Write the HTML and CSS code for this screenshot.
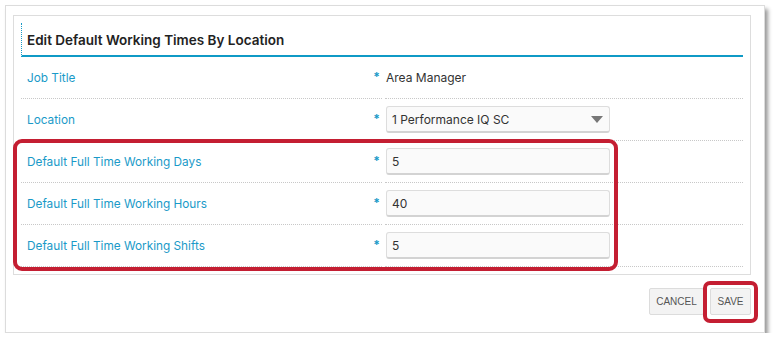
FILE: index.html
```html
<!DOCTYPE html>
<html>
<head>
    <title>Edit Default Working Times By Location</title>
    <link rel="stylesheet" href="styles.css">
</head>
<body>
    <div class="dialog">
        <div class="panel">
            <div class="panel-head">
                <h2>Edit Default Working Times By Location</h2>
            </div>
            <div class="form">
                <div class="row">
                    <div class="label">Job Title<span class="req">*</span></div>
                    <div class="value"><span class="text">Area Manager</span></div>
                </div>
                <div class="row">
                    <div class="label">Location<span class="req">*</span></div>
                    <div class="value">
                        <div class="field select">
                            <span>1 Performance IQ SC</span>
                            <span class="caret"></span>
                        </div>
                    </div>
                </div>
                <div class="highlight-group">
                    <div class="row">
                        <div class="label">Default Full Time Working Days<span class="req">*</span></div>
                        <div class="value"><div class="field">5</div></div>
                    </div>
                    <div class="row">
                        <div class="label">Default Full Time Working Hours<span class="req">*</span></div>
                        <div class="value"><div class="field">40</div></div>
                    </div>
                    <div class="row">
                        <div class="label">Default Full Time Working Shifts<span class="req">*</span></div>
                        <div class="value"><div class="field">5</div></div>
                    </div>
                    <div class="mark mark-fields"></div>
                </div>
            </div>
        </div>
        <div class="actions">
            <button class="btn btn-cancel">CANCEL</button>
            <span class="save-wrap">
                <button class="btn btn-save">SAVE</button>
                <span class="mark mark-save"></span>
            </span>
        </div>
    </div>
</body>
</html>
```

FILE: styles.css
```css
body {
    margin: 0;
    background: #fff;
    font-family: Inter, "Noto Sans", Arial, sans-serif;
}
.dialog {
    margin: 5px 0 0 5px;
    width: 760px;
    height: 328px;
    box-sizing: border-box;
    border: 1px solid #dcdcdc;
    padding: 9px 13px 0 7px;
    box-shadow: 3px 4px 4px rgba(0, 0, 0, 0.4);
    background: #fff;
}
.panel {
    border: 1px solid #ddd;
    padding: 7px;
}
.panel-head {
    height: 32px;
    border-left: 1px dotted #1a9ac8;
    border-bottom: 2px solid #0f9ac6;
    display: flex;
    align-items: center;
    padding-left: 5px;
}
.panel-head h2 {
    margin: 0;
    font-size: 13.5px;
    font-weight: 600;
    color: #222;
    position: relative;
    top: 1px;
}
.highlight-group {
    position: relative;
}
.row {
    display: grid;
    grid-template-columns: 361px 358px;
    column-gap: 3px;
    height: 42px;
}
.label, .value {
    border-bottom: 1px dotted #c8c8c8;
    display: flex;
    align-items: center;
}
.label {
    padding-left: 6px;
    padding-right: 2px;
    font-size: 11.8px;
    color: #1a9ac8;
    justify-content: space-between;
}
.req {
    color: #1a9ac8;
    font-size: 12px;
    font-weight: 700;
    position: relative;
    top: -1px;
}
.value {
    padding-left: 1px;
    font-size: 12px;
    color: #333;
}
.field {
    width: 224px;
    height: 27px;
    box-sizing: border-box;
    background: #fafafa;
    border: 1px solid #ddd;
    border-bottom: 2px solid #d3d3d3;
    border-radius: 3px;
    padding: 0 5px;
    display: flex;
    align-items: center;
    font-size: 12px;
    color: #333;
}
.select {
    justify-content: space-between;
}
.caret {
    width: 0;
    height: 0;
    border-left: 6px solid transparent;
    border-right: 6px solid transparent;
    border-top: 7px solid #777;
    margin-right: 1px;
}
.mark {
    position: absolute;
    border: 4px solid #c41e32;
    pointer-events: none;
}
.mark-fields {
    left: -8px;
    top: -2px;
    width: 597px;
    height: 124px;
    border-radius: 9px;
}
.actions {
    display: flex;
    justify-content: flex-end;
    align-items: center;
    gap: 6px;
    margin-top: 13px;
    padding-right: 0;
}
.btn {
    font-family: Arial, "Liberation Sans", sans-serif;
    font-size: 10px;
    color: #555;
    background: #f3f3f3;
    border: 1px solid #dcdcdc;
    border-radius: 2px;
    height: 27px;
    padding: 0;
    cursor: pointer;
}
.btn-cancel {
    width: 55px;
}
.btn-save {
    width: 41px;
}
.save-wrap {
    position: relative;
    display: inline-block;
    line-height: 0;
}
.mark-save {
    left: -7px;
    top: -7px;
    right: -7px;
    bottom: -8px;
    border-radius: 7px;
}
```
